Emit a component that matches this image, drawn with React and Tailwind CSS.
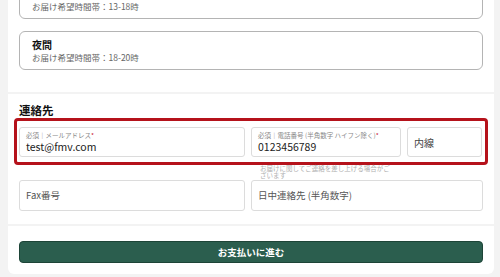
import React from "react"

const font = { fontFamily: '"Noto Sans CJK JP", "Noto Sans", sans-serif' }

function TimeCard({ title, sub }) {
  return (
    <div className="h-[39px] border border-[#b4b4b4] rounded-[6px] pl-[12px] pt-[6px]">
      <div className="h-[13px] text-[10px] leading-[13px] font-bold text-[#111]">{title}</div>
      <div className="text-[8.5px] leading-[12px] text-[#666]">{sub}</div>
    </div>
  )
}

function Field({ label, value, placeholder, className = "" }) {
  return (
    <div className={`h-[30px] border border-[#dcdcdc] rounded-[3px] bg-white px-[6px] flex flex-col justify-center ${className}`}>
      {label && (
        <div className="text-[6.5px] leading-[9px] text-[#888] whitespace-nowrap">
          {label}<span className="text-[#c8102e]">*</span>
        </div>
      )}
      {value && <div className="text-[10.5px] leading-[13px] text-[#222]">{value}</div>}
      {placeholder && <div className="text-[9.5px] leading-[13px] text-[#555]">{placeholder}</div>}
    </div>
  )
}

export default function App() {
  return (
    <div className="w-[500px] h-[277px] overflow-hidden bg-[#f3f3f3] pl-[8px] pr-[6px]" style={font}>
      {/* delivery time section, scrolled so only the end of the first card shows */}
      <div className="bg-white -mt-[20px] px-[11px] pb-[22px] flex flex-col gap-[12px]">
        <TimeCard sub="お届け希望時間帯：13-18時" />
        <TimeCard title="夜間" sub="お届け希望時間帯：18-20時" />
      </div>

      {/* contact section */}
      <div className="bg-white mt-[2px] pb-[13px]">
        <h2 className="px-[11px] pt-[9px] text-[11.5px] leading-[15px] font-bold text-[#111]">連絡先</h2>
        <div className="mx-[6px] border-[3px] border-[#b5121b] rounded-[4px] pl-[2px] pr-[3px] pt-[6px] pb-[5px] flex gap-[6px]">
          <Field className="w-[226px]" label="必須｜メールアドレス" value="test@fmv.com" />
          <Field className="w-[150px]" label="必須｜電話番号 (半角数字 ハイフン除く)" value="0123456789" />
          <div className="flex-1 h-[30px] border border-[#dcdcdc] rounded-[3px] px-[6px] flex items-center text-[10px] text-[#444]">内線</div>
        </div>
        <div className="h-[15px] pl-[252px] text-[6.5px] leading-[7px] text-[#b0b0b0]">
          <div className="w-[133px]">お届けに関してご連絡を差し上げる場合がございます</div>
        </div>
        <div className="px-[11px] flex gap-[6px]">
          <Field className="w-[226px] h-[31px]" placeholder="Fax番号" />
          <Field className="flex-1 h-[31px]" placeholder="日中連絡先 (半角数字)" />
        </div>
      </div>

      {/* submit section */}
      <div className="bg-white mt-[2px] rounded-b-[6px] px-[11px] pt-[11px] pb-[11px]">
        <button className="w-full h-[22px] bg-[#2b5e4e] border border-[#1d4437] rounded-[4px] text-white text-[9.5px] font-bold">
          お支払いに進む
        </button>
      </div>
    </div>
  )
}
